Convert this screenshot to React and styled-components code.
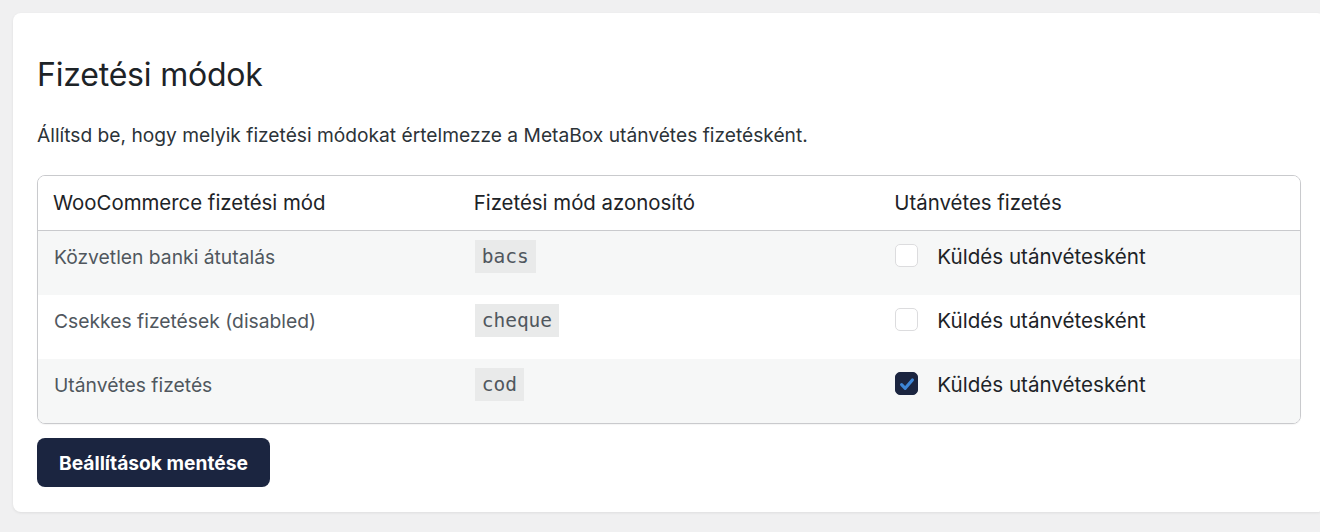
import styled, { createGlobalStyle } from "styled-components";

const GlobalStyle = createGlobalStyle`
  html, body {
    margin: 0;
    padding: 0;
    background: #f0f0f1;
    overflow: hidden;
  }
  body {
    font-family: Inter, "Noto Sans", "Liberation Sans", sans-serif;
    color: #1d2327;
  }
`;

const Page = styled.div`
  padding: 13px;
  height: 532px;
  box-sizing: border-box;
`;

const Card = styled.section`
  width: 1312px;
  box-sizing: border-box;
  background: #fff;
  border-radius: 8px;
  box-shadow: 0 1px 3px rgba(0, 0, 0, 0.08);
  padding: 42px 24px 25px;
`;

const Title = styled.h1`
  margin: 0;
  font-size: 32px;
  font-weight: 400;
  line-height: 40px;
  letter-spacing: -0.2px;
  color: #1d2327;
`;

const Description = styled.p`
  margin: 27px 0 27px;
  font-size: 19.2px;
  line-height: 26px;
  color: #2c3338;
`;

const Table = styled.div`
  border: 1px solid #c9cacd;
  border-radius: 8px;
  overflow: hidden;
  box-shadow: 0 1px 1px rgba(0, 0, 0, 0.04);
`;

const Row = styled.div`
  display: grid;
  grid-template-columns: repeat(3, 1fr);
  background: ${(p) => (p.$striped ? "#f6f7f7" : "#fff")};
  border-bottom: ${(p) => (p.$head ? "1px solid #c9cacd" : "none")};
`;

const HeadCell = styled.div`
  padding: 13px 15px 14px;
  font-size: 20.4px;
  line-height: 27px;
  color: #1d2327;
`;

const Cell = styled.div`
  display: flex;
  align-items: center;
  padding: 9px 16px 22px;
  min-height: 33px;
  font-size: 19.3px;
  color: ${(p) => (p.$muted ? "#50575e" : "#1d2327")};
`;

const Code = styled.code`
  display: inline-block;
  padding: 0 7px;
  line-height: 33px;
  font-family: "DejaVu Sans Mono", "Liberation Mono", monospace;
  font-size: 19.5px;
  color: #50575e;
  background: #e9eaea;
`;

const CheckLabel = styled.label`
  display: flex;
  align-items: center;
  gap: 19px;
  font-size: 20.6px;
  color: #1d2327;
`;

const Box = styled.span`
  width: 23px;
  height: 23px;
  box-sizing: border-box;
  border-radius: 5px;
  border: 1px solid ${(p) => (p.$checked ? "#1b2540" : "#dcdcde")};
  background: ${(p) => (p.$checked ? "#1b2540" : "#fff")};
  display: flex;
  align-items: center;
  justify-content: center;
  margin-top: -2px;
`;

const SaveButton = styled.button`
  margin-top: 14px;
  height: 49px;
  padding: 0 22px;
  border: none;
  border-radius: 8px;
  background: #1b2540;
  color: #fff;
  font-family: Inter, "Noto Sans", sans-serif;
  font-size: 19.2px;
  font-weight: 700;
  cursor: pointer;
`;

const rows = [
  { name: "Közvetlen banki átutalás", id: "bacs", cod: false },
  { name: "Csekkes fizetések (disabled)", id: "cheque", cod: false },
  { name: "Utánvétes fizetés", id: "cod", cod: true },
];

const Checkbox = ({ checked }) => (
  <Box $checked={checked}>
    {checked && (
      <svg width="18" height="18" viewBox="0 0 16 16">
        <path
          d="M3.2 8.6 L6.4 11.8 L12.8 4.4"
          fill="none"
          stroke="#3d86d6"
          strokeWidth="2.8"
          strokeLinecap="round"
          strokeLinejoin="round"
        />
      </svg>
    )}
  </Box>
);

const App = () => {
  return (
    <Page>
      <GlobalStyle />
      <Card>
        <Title>Fizetési módok</Title>
        <Description>
          Állítsd be, hogy melyik fizetési módokat értelmezze a MetaBox utánvétes fizetésként.
        </Description>
        <Table>
          <Row $head>
            <HeadCell>WooCommerce fizetési mód</HeadCell>
            <HeadCell>Fizetési mód azonosító</HeadCell>
            <HeadCell>Utánvétes fizetés</HeadCell>
          </Row>
          {rows.map((r, i) => (
            <Row key={r.id} $striped={i % 2 === 0}>
              <Cell $muted>{r.name}</Cell>
              <Cell>
                <Code>{r.id}</Code>
              </Cell>
              <Cell>
                <CheckLabel>
                  <Checkbox checked={r.cod} />
                  Küldés utánvétesként
                </CheckLabel>
              </Cell>
            </Row>
          ))}
        </Table>
        <SaveButton>Beállítások mentése</SaveButton>
      </Card>
    </Page>
  );
};

export default App;
